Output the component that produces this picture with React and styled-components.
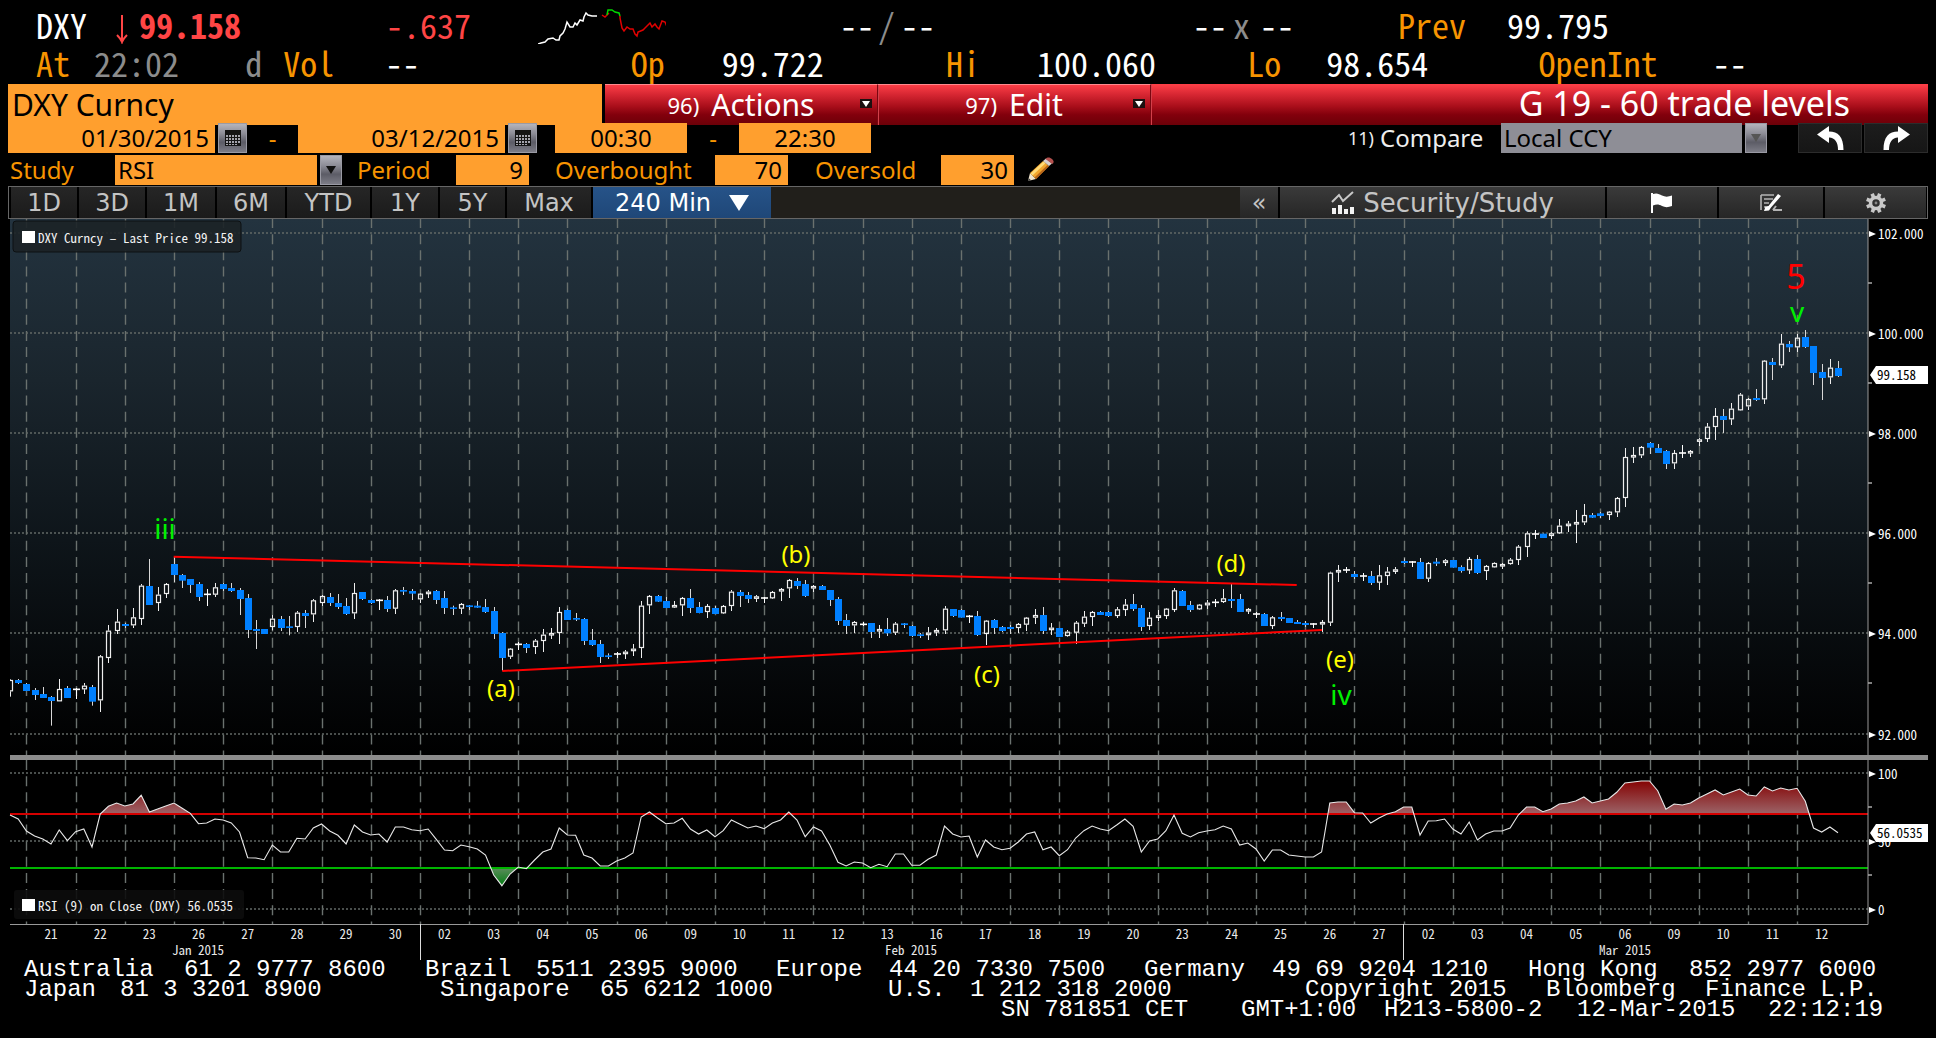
import React from 'react';
import styled, { createGlobalStyle, css } from 'styled-components';

const SANS = '"Noto Sans", "DejaVu Sans", sans-serif';
const WIDE = '"DejaVu Sans", sans-serif';
const TICKER = '"Noto Sans Mono CJK SC", "Noto Sans Mono", "DejaVu Sans Mono", monospace';
const TERMINAL = '"Liberation Mono", monospace';

const AMBER = '#f79400';
const FIELD = '#ff9f2e';

const GlobalStyle = createGlobalStyle`
  * { box-sizing: border-box; }
  html, body { margin: 0; background: #000; }
  body { font-family: ${SANS}; color: #fff; }
  button, input, select { font: inherit; color: inherit; margin: 0; border: 0; border-radius: 0; padding: 0; }
`;

const tracks = (list) => list.map((n) => `minmax(0, ${n}fr)`).join(' ');

/* ---------- layout ---------- */

const Page = styled.main`
  padding: 6px 8px 16px;
  background: #000;
`;

const QuoteRow = styled.div`
  display: grid;
  grid-template-columns: ${(p) => tracks(p.$cols)};
  height: 38px;
  line-height: 38px;
  font-family: ${TICKER};
  font-size: 34px;
  white-space: pre;
`;

const toneColors = { amber: AMBER, red: '#ff4545', grey: '#8c8c8c', white: '#fff' };

const Quote = styled.span`
  color: ${(p) => toneColors[p.$tone || 'white']};
  font-weight: ${(p) => (p.$bold ? 700 : 400)};
`;

const Spark = styled.svg`
  display: block;
  width: 128px;
  height: 38px;
`;

const FallArrow = styled.svg`
  display: block;
  width: 12px;
  height: 38px;
`;

const FormRow = styled.div`
  display: grid;
  grid-template-columns: ${(p) => tracks(p.$cols)};
  height: ${(p) => p.$height || 30}px;
  margin-top: 2px;
  line-height: 30px;
  font-size: 24px;
`;

const TitleInput = styled.input`
  width: 100%;
  padding-left: 4px;
  background: ${FIELD};
  color: #000;
  font-size: 30px;
`;

const TitleBar = styled.div`
  display: grid;
  grid-template-columns: ${tracks([273, 273, 777])};
  background: linear-gradient(#ff4048, #d82733 25%, #a80e1a 55%, #82000c 75%, #6c0008);
`;

const MenuButton = styled.button`
  display: flex;
  align-items: center;
  justify-content: center;
  gap: 12px;
  position: relative;
  background: transparent;
  border-top: 1px solid #ff8a8e;
  border-right: 1px solid #7a0610;
  box-shadow: 1px 0 #d2404a;
  font-size: 30px;
  line-height: 36px;
`;

const MenuNumber = styled.span`
  font-size: ${(p) => (p.$small ? 18 : 22)}px;
`;

const MenuArrow = styled.svg`
  position: absolute;
  right: 5px;
  top: 14px;
  width: 12px;
  height: 9px;
`;

const PageTitle = styled.h1`
  margin: 0;
  padding-right: 78px;
  font-size: 34px;
  font-weight: 400;
  line-height: 38px;
  text-align: right;
  white-space: nowrap;
`;

const Field = styled.input`
  width: 100%;
  height: 30px;
  padding: 0 6px;
  background: ${FIELD};
  color: #000;
  text-align: ${(p) => p.$align || 'right'};
`;

const silver = css`
  background: linear-gradient(#b4b4bc, #8c8c96 35%, #5c5c66 65%, #7c7c86);
  border: 1px solid #9a9aa4;
`;

const CalendarButton = styled.button`
  ${silver}
  display: grid;
  place-items: center;
  margin-left: 3px;
`;

const Dash = styled.span`
  color: ${AMBER};
  text-align: center;
`;

const Label = styled.label`
  color: ${AMBER};
  white-space: nowrap;
  padding-left: ${(p) => p.$indent || 0}px;
`;

const Combo = styled.div`
  display: flex;
  gap: 3px;
`;

const Select = styled.select`
  appearance: none;
  flex: 1;
  min-width: 0;
  height: 30px;
  padding-left: 3px;
  background: ${(p) => (p.$muted ? '#8e8e96' : FIELD)};
  color: #000;
`;

const ComboArrow = styled.span`
  ${silver}
  width: 22px;
  display: grid;
  place-items: center;
  color: ${(p) => (p.$muted ? '#555' : '#111')};
`;

const CompareButton = styled.button`
  display: flex;
  align-items: center;
  gap: 6px;
  background: transparent;
  color: #eee;
`;

const HistoryButton = styled.button`
  display: grid;
  place-items: center;
  margin-left: 2px;
  background: linear-gradient(#1d1d1d, #161616);
  border: 1px solid #2c2c2c;
`;

const PencilButton = styled.button`
  display: grid;
  place-items: center;
  background: transparent;
`;

const Toolbar = styled.nav`
  display: grid;
  grid-template-columns: ${(p) => tracks(p.$cols)};
  column-gap: 2px;
  height: 33px;
  margin-top: 1px;
  padding: 0 1px 0 2px;
  border: 1px solid #666;
  background: #000;
  font-family: ${WIDE};
  font-size: 24px;
  line-height: 30px;
`;

const Tool = styled.button`
  display: flex;
  align-items: center;
  justify-content: center;
  gap: ${(p) => (p.$active ? 18 : 8)}px;
  white-space: nowrap;
  color: ${(p) => (p.$active ? '#fff' : '#c4c4c4')};
  background: ${(p) =>
    p.$active
      ? 'linear-gradient(#265388, #1f4778)'
      : p.$raised
      ? 'linear-gradient(#3a3a3a, #262626)'
      : 'linear-gradient(#262626, #1b1b1b)'};
`;

const ToolSpacer = styled.span`
  margin: 0 -2px;
  background: #211f1b;
`;

const StudyText = styled.span`
  font-size: 26px;
`;

const ChartSvg = styled.svg`
  display: block;
  width: 100%;
  height: auto;
  font-family: ${TICKER};
  font-size: 13px;
`;

const Footer = styled.footer`
  padding: 0 32px 0 16px;
  font-family: ${TERMINAL};
  font-size: 24px;
  line-height: 20px;
`;

const FooterLine = styled.div`
  display: grid;
  grid-template-columns: ${(p) => tracks(p.$cols)};
  white-space: nowrap;
`;

/* ---------- icons ---------- */

const CalendarIcon = () => (
  <svg width="16" height="16" viewBox="0 0 16 16" aria-hidden="true">
    <rect width="16" height="16" fill="#141414" />
    {[5, 8, 11].map((y) =>
      [1, 4, 7, 10, 13].map((x) => <rect key={`${x}-${y}`} x={x} y={y} width="2" height="2" fill="#a4a4ac" />)
    )}
    {[1, 4, 7, 10].map((x) => (
      <rect key={x} x={x} y="14" width="2" height="1" fill="#a4a4ac" />
    ))}
  </svg>
);

const DownIcon = () => (
  <svg width="10" height="8" viewBox="0 0 10 8" aria-hidden="true">
    <path d="M0 0h10L5 8z" fill="currentColor" />
  </svg>
);

const MenuDown = () => (
  <MenuArrow viewBox="0 0 12 9" aria-hidden="true">
    <rect width="12" height="9" fill="#1c1010" />
    <path d="M2 2h8L6 8z" fill="#fff" />
  </MenuArrow>
);

const TurnIcon = ({ flip }) => (
  <svg width="27" height="24" viewBox="0 0 27 24" aria-hidden="true">
    <path
      d="M0 8.500 12 0v5.500c9 0 14.500 5 14.500 18.500h-5.500c0-8-3-12-9-12.500V17z"
      fill="#fff"
      transform={flip ? 'translate(27 0) scale(-1 1)' : undefined}
    />
  </svg>
);

const PencilIcon = () => (
  <svg width="28" height="26" viewBox="0 0 28 26" aria-hidden="true">
    <path d="M1 24 3 16 9 22z" fill="#f0e4cc" />
    <path d="M1 24 1.800 21.200 4 23.200z" fill="#333" />
    <path d="M3 16 16 4l6 5L9 22z" fill="#f2a62c" />
    <path d="M3.500 16.500 16.500 4.500l2 1.700L5.500 18.500z" fill="#ffdb78" />
    <path d="M7.500 20.500 20.500 8l1.500 1.200L9 22z" fill="#b8661a" />
    <path d="M16 4l3-2.500 6 5L22 9z" fill="#d8d0cc" />
    <path d="M18.500 2C20.500-.3 23 .2 25 2s2.200 3.500.3 5z" fill="#b4504e" />
  </svg>
);

const StudyIcon = () => (
  <svg width="24" height="24" viewBox="0 0 24 24" aria-hidden="true" fill="#f2f2f2">
    <path d="M1 11 8 4l4 6L22 1" fill="none" stroke="#c8c8c8" strokeWidth="2" />
    <path d="M1 17h4v6H1zM7 14h4v9H7zM13 18h4v5h-4zM19 16h4v7h-4z" />
  </svg>
);

const FlagIcon = () => (
  <svg width="24" height="22" viewBox="0 0 24 22" aria-hidden="true" fill="#fff">
    <path d="M1 1h2v20H1z" />
    <path d="M3 2c4-1.500 6 0 9 1.500s6 1.500 10 0V14c-4 1.500-7 1.500-10 0s-5-2-9-.5z" />
  </svg>
);

const NoteIcon = () => (
  <svg width="24" height="20" viewBox="0 0 24 20" aria-hidden="true">
    <path d="M2 2h13M2 2v15M5 6h9M5 10h5M5 14h2" fill="none" stroke="#b4b4b4" strokeWidth="1.600" />
    <path d="M5 18 6.500 13.500l3-.5L19 1l3 2L12 14.500l-2 3z" fill="#fff" />
    <path d="M14 17h9M14 17l3-4" stroke="#b4b4b4" strokeWidth="2" />
  </svg>
);

const GearIcon = () => (
  <svg width="22" height="22" viewBox="0 0 22 22" aria-hidden="true">
    {[0, 45, 90, 135, 180, 225, 270, 315].map((a) => (
      <rect key={a} x="9.200" y="1" width="3.600" height="5" fill="#c8c8c8" transform={`rotate(${a + 22} 11 11)`} />
    ))}
    <circle cx="11" cy="11" r="5.500" fill="none" stroke="#c8c8c8" strokeWidth="3.500" />
    <circle cx="11" cy="11" r="1.400" fill="#888" />
  </svg>
);

/* ---------- chart data ---------- */

// Each bar is "kind high bodyTop bodyBottom low", in thirds of a chart unit
// below the panel's base: w = up, b = down, d = open equals close.
const BARS_LOW = `w 478 480 514 530,b 477 480 489 492,b 489 492 513 513,b 504 510 525 540,b 501 522 534 534,
b 528 531 543 617,w 477 507 544 544,b 498 504 534 534,d 504 508 508 537,w 489 497 508 522,b 495 501 545 557,
w 405 409 541 576,w 315 332 414 429,w 267 305 333 342,b 309 312 318 324,w 264 292 316 324,w 192 197 297 315,
b 117 198 255 255,w 201 224 249 273,w 189 192 222 234,b 110 132 165 186,b 162 165 182 204,b 177 177 195 219,
b 186 192 231 243,d 207 223 223 258,w 189 202 224 231,b 189 192 207 213,b 189 204 213 216,b 204 210 237 285,
b 222 234 330 354,b 300 327 333 387,b 327 327 342 342,w 285 296 321 331,b 288 297 324 333,b 288 319 323 346,
w 273 278 321 336,b 270 279 288 324,w 237 241 283 306,w 225 228 249 258,b 219 231 249 258,b 222 249 261 267,
b 234 258 282 285,w 189 219 280 297,b 216 216 237 240,b 237 240 249 252,d 237 241 241 270,b 228 240 267 276,
w 207 211 266 282,b 201 210 215 225,b 207 213 221 240,w 219 221 238 249,w 210 215 220 234,b 210 213 240 252,
b 213 234 264 282,b 257 262 266 285,w 249 252 266 282,b 255 256 261 270,b 243 257 263 264,b 237 261 276 279,
b 261 273 342 357,b 336 339 414 452,w 384 386 410 417,d 366 373 373 390,b 369 372 384 399,w 357 362 381 402,
w 327 344 363 396,w 324 339 344 357,w 261 276 339 372,b 266 270 300 300,b 279 294 299 303,b 294 297 363 375,
b 327 360 375 378,b 360 372 411 429,b 400 406 411 417,d 396 402 402 414,w 390 395 402 417,w 372 386 392 408,
w 243 257 384 414,w 225 228 256 282,b 225 228 245 246,b 231 243 264 264,w 243 255 262 264,w 231 234 256 288,
b 207 234 264 279,b 246 261 279 280,w 252 258 276 294,b 258 264 282 282,w 255 258 280 282,w 210 215 258 273,
b 210 216 228 261,b 216 225 237 249,w 225 229 236 246,d 231 234 234 249,w 213 216 235 237,w 204 207 214 243,
w 177 180 205 234,b 174 183 198 207,b 180 192 228 231,w 195 198 205 216,b 195 198 210 210,b 210 210 240 258,
b 231 237 303 315,b 282 300 318 342,w 303 306 316 339,d 306 313 313 318,b 309 309 336 354,w 315 327 334 354,
b 294 327 340 348,w 306 311 338 345,b 309 310 315 324,b 315 318 348 351,b 339 343 348 354,w 321 338 345 360,
w 324 330 336 348,w 258 266 331 342,b 267 267 288 291,b 267 270 293 293,d 285 289 289 309,b 273 288 345 348,
w 300 302 342 375,b 297 300 324 342,b 318 321 333 336,b 315 321 327 342,w 309 312 324 339,w 291 293 314 333,
w 267 285 293 312,b 261 285 333 342,w 309 323 330 345,b 324 324 351 351,w 330 335 348 350,w 303 308 338 372,
w 273 290 311 321,w 273 276 291 318,b 273 276 285 285,b 273 276 288 291,w 261 268 288 294,w 237 254 270 288,
b 222 252 267 273,b 255 264 321 333,w 276 293 318 330,w 270 286 294 303,w 264 266 288 297,w 204 211 270 276,
b 210 213 258 258,b 243 255 270 276,w 252 254 268 270,w 240 248 256 267,d 237 247 247 261,w 207 235 246 249,
b 192 237 243 264,b 222 237 276 276,w 264 267 272 282,d 276 282 282 294,b 279 282 318 318,w 288 292 318 327,
b 276 291 297 303,b 294 294 309 309,b 300 306 312 312,b 303 309 315 321,d 309 312 312 324,w 300 306 313 336,
w 155 158 308 318,w 135 150 155 186,d 141 150 150 159,b 153 162 171 177,d 159 168 168 183,b 153 168 189 195,
w 135 166 188 210,w 141 155 168 195,w 141 148 153 162,b 115 123 129 132,d 123 126 126 141,b 114 126 177 177,
w 126 129 176 186,b 114 125 131 138,w 117 121 129 138,b 120 120 143 143`;

const BARS_HIGH = `b 1036 1041 1053 1058,w 1011 1017 1051 1062,b 1005 1017 1059 1062,w 1035 1038 1053 1080,
w 1027 1029 1042 1043,w 1029 1032 1039 1047,w 1014 1019 1032 1034,w 975 980 1020 1035,w 934 940 981 1011,
d 930 942 942 957,b 941 941 954 954,w 936 940 948 957,w 897 917 940 942,w 903 911 917 936,w 870 906 912 969,
w 852 885 907 915,b 879 885 893 894,b 876 880 888 894,w 873 875 885 900,w 831 834 877 891,w 684 711 834 861,
w 681 705 711 729,w 678 681 706 714,b 666 669 683 702,b 672 684 699 699,b 690 693 732 747,w 690 699 730 747,
d 675 699 699 714,w 690 693 699 711,w 654 658 663 678,w 609 620 657 666,w 564 588 621 660,b 567 588 600 639,
w 549 566 598 615,w 519 524 571 572,w 534 537 559 570,b 507 534 540 543,w 420 422 538 552,b 414 426 435 480,
w 342 371 436 444,b 363 372 382 396,w 342 353 382 396,b 330 351 381 384,b 378 378 459 495,b 432 456 474 540,
w 417 443 472 492,b 423 444 468 471`;

const RSI_POINTS = [
  225, 237, 273, 288, 297, 312, 270, 302, 275, 267, 321, 222, 199, 189, 198, 192, 166, 216, 207, 198, 189, 205, 220,
  251, 249, 237, 240, 249, 276, 353, 354, 359, 315, 336, 336, 295, 297, 264, 252, 273, 286, 312, 255, 276, 285, 282,
  306, 261, 261, 269, 272, 267, 298, 330, 332, 315, 320, 327, 345, 405, 437, 402, 381, 386, 360, 336, 327, 264, 285,
  286, 345, 354, 378, 378, 363, 354, 339, 231, 216, 234, 251, 249, 235, 267, 282, 270, 290, 272, 240, 252, 264, 258,
  266, 249, 240, 216, 240, 290, 261, 273, 315, 367, 378, 366, 369, 383, 373, 380, 342, 342, 376, 376, 358, 345, 258,
  282, 291, 288, 351, 300, 321, 329, 325, 306, 282, 276, 329, 321, 347, 329, 294, 272, 258, 267, 272, 255, 237, 259,
  336, 303, 297, 272, 225, 280, 291, 278, 273, 269, 258, 267, 315, 309, 327, 363, 330, 330, 345, 348, 351, 351, 336,
  189, 186, 186, 218, 219, 249, 234, 222, 215, 201, 201, 285, 243, 242, 237, 267, 282, 246, 300, 282, 273, 273, 264,
  225, 201, 201, 215, 207, 192, 189, 183, 171, 189, 183, 177, 157, 129, 126, 123, 123, 152, 208, 192, 195, 189, 174,
  162, 150, 165, 156, 147, 165, 168, 141, 153, 144, 150, 145, 184, 264, 276, 261, 278,
];

const STEP = 49.185 / 6;
const FIRST_DAY = 26.4;
const barX = (i) => FIRST_DAY + (i - 2) * STEP;

const parse = (src, base) =>
  src.split(',').map((row) => {
    const [kind, ...v] = row.trim().split(' ');
    return [kind, ...v.map((n) => base + Number(n) / 3)];
  });

const BARS = [...parse(BARS_LOW, 520), ...parse(BARS_HIGH, 220)];

const DAYS = [
  '21', '22', '23', '26', '27', '28', '29', '30', '02', '03', '04', '05', '06', '09', '10', '11', '12', '13', '16',
  '17', '18', '19', '20', '23', '24', '25', '26', '27', '02', '03', '04', '05', '06', '09', '10', '11', '12',
];

const MONTHS = [
  ['Jan 2015', 198],
  ['Feb 2015', 911],
  ['Mar 2015', 1625],
];

const PRICES = [
  ['102.000', 233],
  ['100.000', 333],
  ['98.000', 433],
  ['96.000', 533],
  ['94.000', 633],
  ['92.000', 734],
];

const RSI_SCALE = [
  ['100', 773],
  ['50', 841],
  ['0', 909],
];

const WAVES = [
  ['iii', 165, 539, '#00f000', 28],
  ['(a)', 501, 697, '#ffff00', 24],
  ['(b)', 796, 563, '#ffff00', 24],
  ['(c)', 987, 683, '#ffff00', 24],
  ['(d)', 1231, 572, '#ffff00', 24],
  ['(e)', 1340, 668, '#ffff00', 24],
  ['iv', 1341, 705, '#00f000', 28],
  ['v', 1797, 322, '#00f000', 28],
  ['5', 1796, 289, '#ff0000', 34],
];

const OVERBOUGHT = 814;
const OVERSOLD = 868;

const Candle = ({ bar: [kind, high, top, bottom, low], x }) => {
  const cx = Math.round(x) + 0.5;
  if (kind === 'b') {
    return (
      <g>
        <path d={`M${cx} ${high}V${low}`} stroke="#d8d8d8" />
        <rect x={cx - 3.5} y={top} width="7" height={Math.max(1.6, bottom - top)} fill="#0080ff" />
      </g>
    );
  }
  if (kind === 'd') {
    return (
      <g stroke="#fff">
        <path d={`M${cx} ${high}V${low}`} />
        <path d={`M${cx - 3.5} ${top}h7`} strokeWidth="1.6" />
      </g>
    );
  }
  return (
    <g stroke="#eee">
      <path d={`M${cx} ${high}V${top}M${cx} ${bottom}V${low}`} />
      <rect x={cx - 2} y={top + 0.5} width="4" height={Math.max(1.5, bottom - top - 1)} fill="none" strokeWidth="1.2" />
    </g>
  );
};

const Tag = ({ y, children }) => (
  <g>
    <path d={`M1870 ${y + 9}l6-9h52v18h-52z`} fill="#fff" />
    <text x="1877" y={y + 14} fill="#000">
      {children}
    </text>
  </g>
);

const Chart = () => {
  const points = RSI_POINTS.map((v, i) => `${i === 0 ? 10 : barX(i).toFixed(1)},${(740 + v / 3).toFixed(1)}`);
  const line = points.join(' ');
  const area = `10,${OVERBOUGHT} ${line} ${barX(RSI_POINTS.length - 1).toFixed(1)},${OVERBOUGHT}`;
  const areaLow = `10,${OVERSOLD} ${line} ${barX(RSI_POINTS.length - 1).toFixed(1)},${OVERSOLD}`;
  const dayLines = DAYS.map((_, k) => Math.round(FIRST_DAY + k * 6 * STEP) + 0.5);

  return (
    <ChartSvg viewBox="8 219 1920 741" role="img" aria-label="DXY price and RSI chart">
      <defs>
        <linearGradient id="panel" x1="0" y1="0" x2="0" y2="1">
          <stop offset="0" stopColor="#23333f" />
          <stop offset="0.300" stopColor="#1a252d" />
          <stop offset="0.600" stopColor="#0e151a" />
          <stop offset="1" stopColor="#000" />
        </linearGradient>
        <linearGradient id="hot" gradientUnits="userSpaceOnUse" x1="0" y1="780" x2="0" y2="814">
          <stop offset="0" stopColor="#840000" />
          <stop offset="1" stopColor="#9c6468" />
        </linearGradient>
        <linearGradient id="cold" gradientUnits="userSpaceOnUse" x1="0" y1="868" x2="0" y2="886">
          <stop offset="0" stopColor="#5c8c5c" />
          <stop offset="1" stopColor="#007c10" />
        </linearGradient>
        <clipPath id="above">
          <rect x="10" y="762" width="1858" height={OVERBOUGHT - 762} />
        </clipPath>
        <clipPath id="below">
          <rect x="10" y={OVERSOLD} width="1858" height="54" />
        </clipPath>
        <clipPath id="plot">
          <rect x="10" y="219" width="1858" height="705" />
        </clipPath>
      </defs>

      <rect x="10" y="219" width="1858" height="536" fill="url(#panel)" />

      <g stroke="#6a716e" strokeWidth="1.400" strokeDasharray="10 6.140">
        {dayLines.map((x) => (
          <path key={x} d={`M${x} 218V755`} />
        ))}
        {dayLines.map((x) => (
          <path key={x} d={`M${x} 760V924`} />
        ))}
      </g>
      <g stroke="#626866" strokeWidth="1.500" strokeDasharray="2 2">
        {[...PRICES, ...RSI_SCALE].map(([t, y]) => (
          <path key={t} d={`M10 ${y}H1868`} />
        ))}
      </g>

      <polygon points={area} fill="url(#hot)" clipPath="url(#above)" />
      <polygon points={areaLow} fill="url(#cold)" clipPath="url(#below)" />
      <g strokeWidth="2">
        <path d={`M10 ${OVERBOUGHT}H1868`} stroke="#d40000" />
        <path d={`M10 ${OVERSOLD}H1868`} stroke="#00b400" />
      </g>
      <polyline points={line} fill="none" stroke="#e8e8e8" strokeWidth="1.100" />

      <g clipPath="url(#plot)">
        {BARS.map((bar, i) => (
          <Candle key={i} bar={bar} x={barX(i)} />
        ))}
      </g>

      <g stroke="#ff0000" strokeWidth="2">
        <path d="M173.700 556.700 1296.700 585" />
        <path d="M502.300 671 1322 630" />
      </g>

      <rect x="10" y="755" width="1918" height="5" fill="#8c8c8c" />
      <path d="M1868 219V755M1868 760V924.500M10 924.500H1868" stroke="#999" fill="none" />
      {[283, 383, 483, 583, 683, 807, 875].map((y) => (
        <path key={y} d={`M1868 ${y}h4`} stroke="#aaa" strokeWidth="1.500" />
      ))}
      {[...PRICES, ...RSI_SCALE].map(([t, y]) => (
        <g key={t} fill="#fff">
          <path d={`M1869 ${y - 2}l7 3-7 3z`} />
          <text x="1878" y={y + 6}>
            {t}
          </text>
        </g>
      ))}
      <Tag y={366}>99.158</Tag>
      <Tag y={824}>56.0535</Tag>

      <g fontFamily={SANS}>
        {WAVES.map(([t, x, y, color, size]) => (
          <text key={t} x={x} y={y} fill={color} fontSize={size} textAnchor="middle">
            {t}
          </text>
        ))}
      </g>

      <g fill="#f2f2f2">
        <rect x="13" y="221" width="228" height="31" rx="3" fill="#1c2226" fillOpacity="0.900" stroke="#0c1012" />
        <rect x="22" y="231" width="13" height="12" fill="#fff" />
        <text x="38" y="243">DXY Curncy – Last Price 99.158</text>
        <rect x="14" y="890" width="230" height="29" rx="3" fill="#0c0c0c" fillOpacity="0.900" />
        <rect x="22" y="899" width="13" height="12" fill="#fff" />
        <text x="38" y="911">RSI (9) on Close (DXY) 56.0535</text>
      </g>

      <path d="M420.500 924V960M1403.500 924V960" stroke="#ddd" />
      <g fill="#e8e8e8" textAnchor="middle">
        {DAYS.map((d, k) => (
          <text key={k} x={FIRST_DAY + (k + 0.5) * 6 * STEP} y="939">
            {d}
          </text>
        ))}
        {MONTHS.map(([m, x]) => (
          <text key={m} x={x} y="955">
            {m}
          </text>
        ))}
      </g>
    </ChartSvg>
  );
};

const SparkLine = () => (
  <Spark viewBox="538 6 128 38" fill="none" strokeWidth="1.500" aria-hidden="true">
    <path
      stroke="#fff"
      d="M538 44l3-1 4-1 3-3 5-1 3 2h3l1-4 3-3 2-4 2-7 3 5h3l2-4 2 2 3-5 3 1 1-4 2-4 2 2 4 1h5"
    />
    <path stroke="#e00000" d="M602 15l3 2 2-2 2-2M620 16v2l2 10 2 3 3-4 3 2h3l2 5 2 2 1-4 5-2 2-2 3-3 2-2 2 4 3-3 2 3 2 2 3-8 3 1 3 7 4-2" />
    <path stroke="#00d800" d="M607 15l1-5h4l3 2 4 1 1 3" />
  </Spark>
);

const RANGES = ['1D', '3D', '1M', '6M', 'YTD', '1Y', '5Y', 'Max'];

export default function App() {
  return (
    <>
      <GlobalStyle />
      <Page>
        <QuoteRow $cols={[28, 80, 23, 247, 152, 302, 38, 23, 292, 40, 27, 138, 109, 421]}>
          <span />
          <Quote>DXY</Quote>
          <FallArrow viewBox="0 0 12 38" role="img" aria-label="Down">
            <path d="M6 9v26M1 29c2 2 4 4 5 7 1-3 3-5 5-7" fill="none" stroke="#ff4545" strokeWidth="2" />
          </FallArrow>
          <Quote $tone="red" $bold>99.158</Quote>
          <Quote $tone="red">-.637</Quote>
          <SparkLine />
          <Quote>--</Quote>
          <Quote $tone="grey">/</Quote>
          <Quote>--</Quote>
          <Quote>--</Quote>
          <Quote $tone="grey">x</Quote>
          <Quote>--</Quote>
          <Quote $tone="amber">Prev</Quote>
          <Quote>99.795</Quote>
        </QuoteRow>
        <QuoteRow $cols={[28, 58, 151, 38, 102, 245, 91, 224, 91, 210, 79, 212, 174, 215]}>
          <span />
          <Quote $tone="amber">At</Quote>
          <Quote $tone="grey">22:02</Quote>
          <Quote $tone="grey">d</Quote>
          <Quote $tone="amber">Vol</Quote>
          <Quote>--</Quote>
          <Quote $tone="amber">Op</Quote>
          <Quote>99.722</Quote>
          <Quote $tone="amber">Hi</Quote>
          <Quote>100.060</Quote>
          <Quote $tone="amber">Lo</Quote>
          <Quote>98.654</Quote>
          <Quote $tone="amber">OpenInt</Quote>
          <Quote>--</Quote>
        </QuoteRow>

        <FormRow $cols={[594, 3, 1323]} $height={37}>
          <TitleInput aria-label="Security" defaultValue="DXY Curncy" />
          <span />
          <TitleBar>
            <MenuButton type="button">
              <MenuNumber>96)</MenuNumber>Actions
              <MenuDown />
            </MenuButton>
            <MenuButton type="button">
              <MenuNumber>97)</MenuNumber>Edit
              <MenuDown />
            </MenuButton>
            <PageTitle>G 19 - 60 trade levels</PageTitle>
          </TitleBar>
        </FormRow>

        <FormRow $cols={[207, 32, 51, 207, 32, 18, 132, 52, 132, 477, 153, 266, 29, 66, 66]}>
          <Field aria-label="Start date" defaultValue="01/30/2015" />
          <CalendarButton type="button" aria-label="Pick start date"><CalendarIcon /></CalendarButton>
          <Dash>-</Dash>
          <Field aria-label="End date" defaultValue="03/12/2015" />
          <CalendarButton type="button" aria-label="Pick end date"><CalendarIcon /></CalendarButton>
          <span />
          <Field aria-label="Start time" $align="center" defaultValue="00:30" />
          <Dash>-</Dash>
          <Field aria-label="End time" $align="center" defaultValue="22:30" />
          <span />
          <CompareButton type="button"><MenuNumber $small>11)</MenuNumber>Compare</CompareButton>
          <Combo>
            <Select $muted aria-label="Currency" defaultValue="Local CCY"><option>Local CCY</option></Select>
            <ComboArrow $muted><DownIcon /></ComboArrow>
          </Combo>
          <span />
          <HistoryButton type="button" aria-label="Undo"><TurnIcon /></HistoryButton>
          <HistoryButton type="button" aria-label="Redo"><TurnIcon flip /></HistoryButton>
        </FormRow>

        <FormRow $cols={[107, 227, 15, 99, 73, 26, 160, 73, 27, 126, 73, 10, 34, 870]}>
          <Label $indent={2} htmlFor="study">Study</Label>
          <Combo>
            <Select id="study" defaultValue="RSI"><option>RSI</option></Select>
            <ComboArrow><DownIcon /></ComboArrow>
          </Combo>
          <span />
          <Label htmlFor="period">Period</Label>
          <Field id="period" defaultValue="9" />
          <span />
          <Label htmlFor="overbought">Overbought</Label>
          <Field id="overbought" defaultValue="70" />
          <span />
          <Label htmlFor="oversold">Oversold</Label>
          <Field id="oversold" defaultValue="30" />
          <span />
          <PencilButton type="button" aria-label="Edit study"><PencilIcon /></PencilButton>
        </FormRow>

        <Toolbar $cols={[66, 66, 68, 68, 83, 66, 65, 84, 178, 465, 38, 325, 110, 104, 101]}>
          {RANGES.map((r) => (
            <Tool type="button" key={r}>{r}</Tool>
          ))}
          <Tool type="button" $active>240 Min <svg width="20" height="16" viewBox="0 0 20 16" aria-hidden="true"><path d="M0 0h20L10 16z" fill="#fff" /></svg></Tool>
          <ToolSpacer />
          <Tool type="button" $raised>«</Tool>
          <Tool type="button" $raised><StudyIcon /><StudyText>Security/Study</StudyText></Tool>
          <Tool type="button" $raised aria-label="Flag"><FlagIcon /></Tool>
          <Tool type="button" $raised aria-label="Annotate"><NoteIcon /></Tool>
          <Tool type="button" $raised aria-label="Settings"><GearIcon /></Tool>
        </Toolbar>

        <Chart />

        <Footer>
          <FooterLine $cols={[160, 241, 111, 240, 113, 255, 128, 256, 161, 207]}>
            <span>Australia</span>
            <span>61 2 9777 8600</span>
            <span>Brazil</span>
            <span>5511 2395 9000</span>
            <span>Europe</span>
            <span>44 20 7330 7500</span>
            <span>Germany</span>
            <span>49 69 9204 1210</span>
            <span>Hong Kong</span>
            <span>852 2977 6000</span>
          </FooterLine>
          <FooterLine $cols={[96, 320, 160, 288, 82, 335, 241, 159, 191]}>
            <span>Japan</span>
            <span>81 3 3201 8900</span>
            <span>Singapore</span>
            <span>65 6212 1000</span>
            <span>U.S.</span>
            <span>1 212 318 2000</span>
            <span>Copyright 2015</span>
            <span>Bloomberg</span>
            <span>Finance L.P.</span>
          </FooterLine>
          <FooterLine $cols={[977, 240, 143, 193, 191, 128]}>
            <span />
            <span>SN 781851 CET</span>
            <span>GMT+1:00</span>
            <span>H213-5800-2</span>
            <span>12-Mar-2015</span>
            <span>22:12:19</span>
          </FooterLine>
        </Footer>
      </Page>
    </>
  );
}
